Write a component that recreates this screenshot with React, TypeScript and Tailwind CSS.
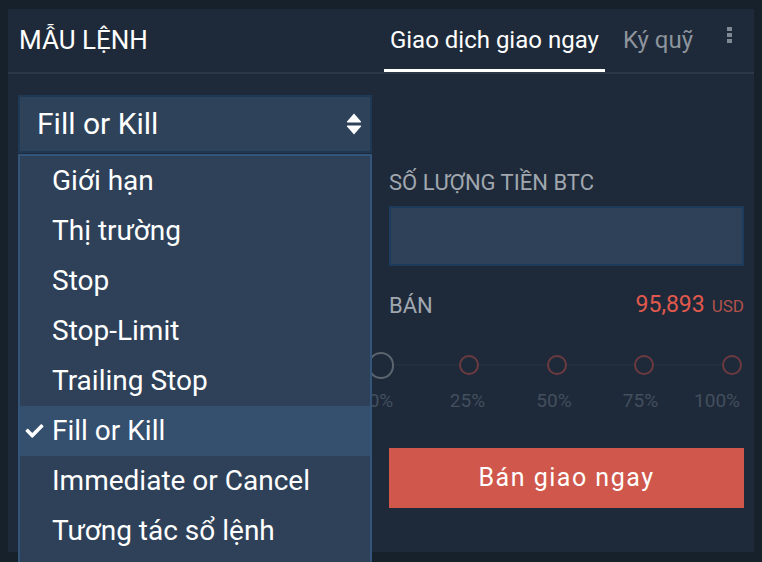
import { FaCheck } from 'react-icons/fa';

const orderTypes = [
  'Giới hạn',
  'Thị trường',
  'Stop',
  'Stop-Limit',
  'Trailing Stop',
  'Fill or Kill',
  'Immediate or Cancel',
  'Tương tác sổ lệnh',
];

const steps = ['0%', '25%', '50%', '75%', '100%'];

function SortIcon() {
  return (
    <svg width="16" height="22" viewBox="0 0 16 22" className="block">
      <path d="M8 0.5 L15 8.5 Q15.5 9.5 14.3 9.5 L1.7 9.5 Q0.5 9.5 1 8.5 Z" fill="#ffffff" />
      <path d="M8 21.5 L15 13.5 Q15.5 12.5 14.3 12.5 L1.7 12.5 Q0.5 12.5 1 13.5 Z" fill="#ffffff" />
    </svg>
  );
}

export default function App() {
  const selected = 'Fill or Kill';

  return (
    <div
      className="h-[562px] w-[762px] overflow-hidden bg-[#17212c] pl-[8px] pt-[9px]"
      style={{ fontFamily: 'Roboto, "Noto Sans", sans-serif' }}
    >
      <div className="h-[543px] w-[746px] bg-[#1e2a3a]">
        {/* Header */}
        <div className="flex h-[65px] items-stretch border-b-2 border-[#2c3845] pl-[11px] pr-[22px]">
          <div className="flex flex-1 items-center pb-[2px] text-[26px] leading-none text-white">MẪU LỆNH</div>
          <div className="flex items-end">
            <div className="border-b-[3px] border-white px-[6px] pb-[17px] text-[24px] leading-none text-white">
              Giao dịch giao ngay
            </div>
            <div className="ml-[12px] px-[6px] pb-[20px] text-[24px] leading-none text-[#8d949c]">Ký quỹ</div>
            <div className="ml-[28px] mt-[18px] flex flex-col gap-[2px] self-start">
              <span className="block h-[4px] w-[5px] bg-[#7f8893]" />
              <span className="block h-[4px] w-[5px] bg-[#7f8893]" />
              <span className="block h-[4px] w-[5px] bg-[#7f8893]" />
            </div>
          </div>
        </div>

        {/* Body */}
        <div className="grid grid-cols-[354px_355px] gap-[17px] pl-[10px] pt-[21px]">
          {/* Left: order type select */}
          <div className="relative">
            <div className="flex h-[58px] items-center justify-between border-2 border-[#1f3954] bg-[#2e4259] pl-[17px] pr-[8px]">
              <span className="text-[30px] leading-none text-white">{selected}</span>
              <SortIcon />
            </div>

            <div className="absolute left-0 top-[59px] z-10 w-[354px] border-2 border-[#34557a] bg-[#2e4159] pb-[30px]">
              {orderTypes.map((t) => (
                <div
                  key={t}
                  className={
                    'relative flex h-[50px] items-center pl-[32px] text-[28px] leading-none text-white ' +
                    (t === selected ? 'bg-[#34506e]' : '')
                  }
                >
                  {t === selected && <FaCheck className="absolute left-[5px] top-[16px] h-[18px] w-[19px]" />}
                  {t}
                </div>
              ))}
            </div>
          </div>

          {/* Right: amount form */}
          <div className="flex flex-col pt-[75px]">
            <div className="text-[22px] leading-[26px] text-[#a0a7af]">SỐ LƯỢNG TIỀN BTC</div>
            <div className="mt-[10px] h-[60px] border-2 border-[#1d3b5c] bg-[#2e4159]" />

            <div className="mt-[26px] flex items-center justify-between leading-[26px]">
              <span className="text-[22px] text-[#a0a7af]">BÁN</span>
              <span className="flex items-baseline gap-[7px]">
                <span className="text-[23px] text-[#e0594c]">95,893</span>
                <span className="text-[17px] text-[#b0524b]">USD</span>
              </span>
            </div>

            <div className="relative -ml-[21px] mr-[-1px] mt-[32px] h-[28px]">
              <div className="absolute left-[13px] right-[13px] top-[13px] h-[2px] bg-[#222f3e]" />
              <div className="relative flex h-full items-center justify-between">
                {steps.map((s, i) => (
                  <div key={s} className="flex w-[26px] justify-center">
                    {i === 0 ? (
                      <span className="block h-[27px] w-[27px] rounded-full border-2 border-[#5c646e] bg-[#1e2a3a]" />
                    ) : (
                      <span className="block h-[20px] w-[20px] rounded-full border-2 border-[#6d3a40] bg-[#1e2a3a]" />
                    )}
                  </div>
                ))}
              </div>
            </div>

            <div className="-ml-[21px] mr-[4px] mt-[11px] flex justify-between text-[19px] leading-[22px] text-[#434f5d]">
              {steps.map((s, i) => (
                <div key={s} className={'flex w-[26px] ' + (i === 4 ? 'justify-end' : 'justify-center')}>
                  <span className="whitespace-nowrap">{s}</span>
                </div>
              ))}
            </div>

            <button className="mt-[36px] h-[60px] bg-[#d0574b] text-[25px] tracking-[1.5px] text-white">
              Bán giao ngay
            </button>
          </div>
        </div>
      </div>
    </div>
  );
}
